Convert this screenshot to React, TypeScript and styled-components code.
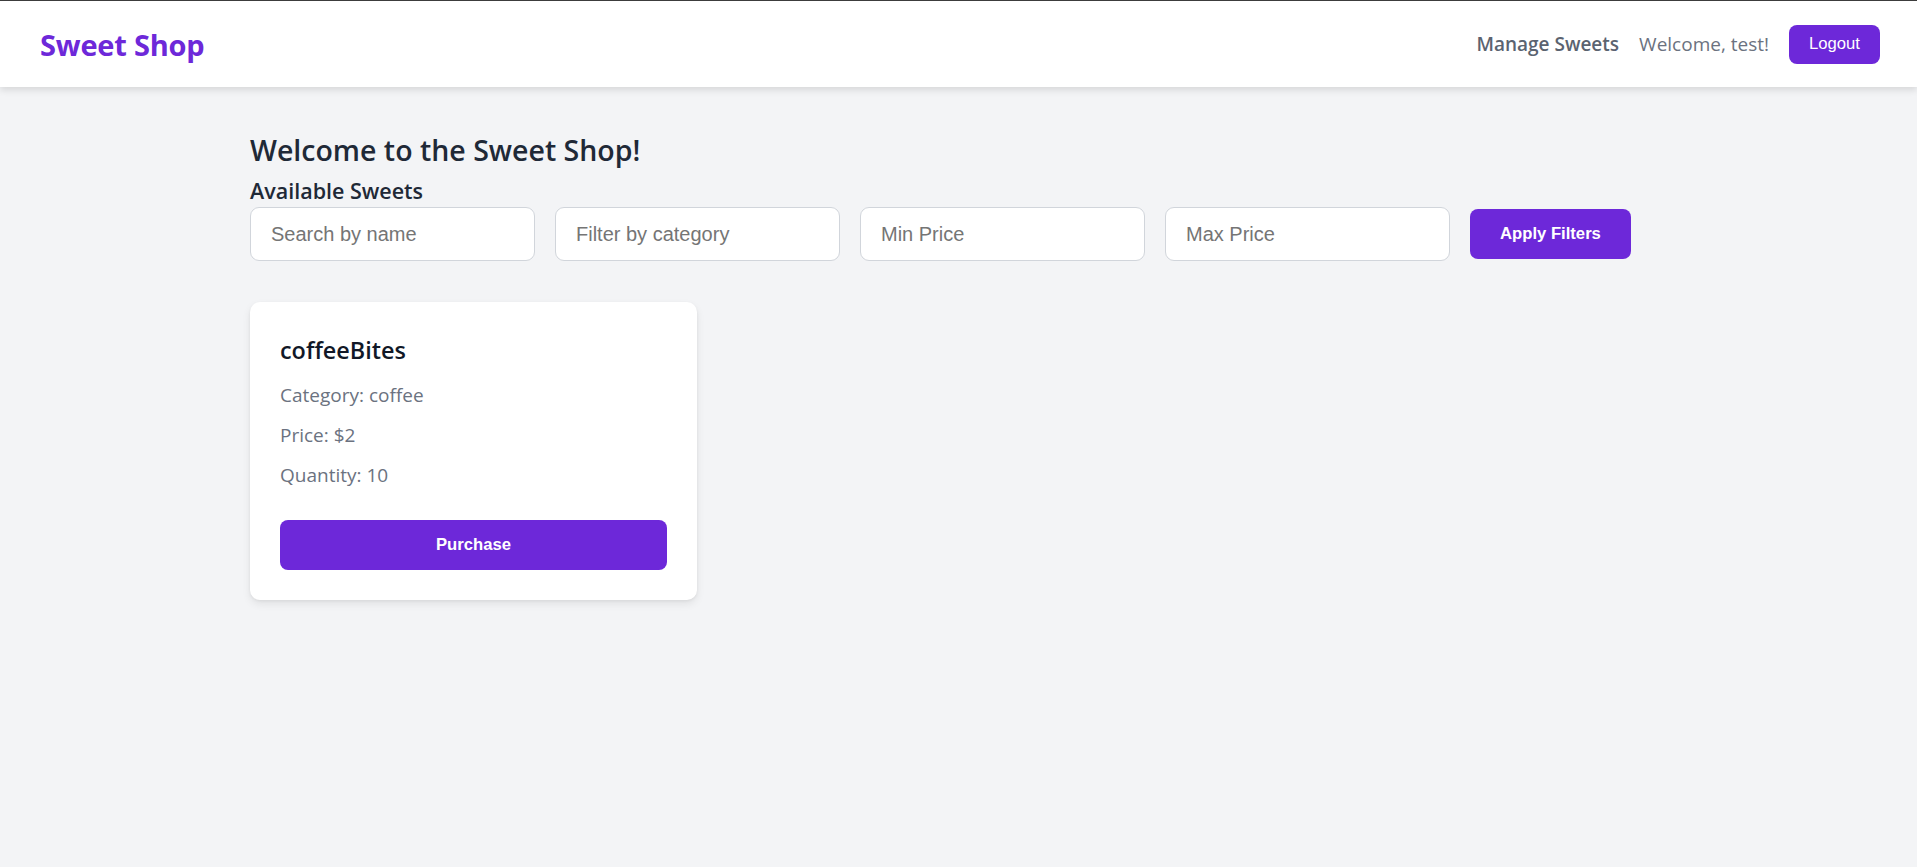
import React from "react";
import styled, { createGlobalStyle } from "styled-components";

const GlobalStyle = createGlobalStyle`
  * { box-sizing: border-box; }
  html, body { margin: 0; padding: 0; }
  body {
    background: #f3f4f6;
    font-family: "Open Sans", "Noto Sans", sans-serif;
    color: #1f2937;
    min-height: 867px;
  }
`;

const Page = styled.div`
  min-height: 867px;
  background: #f3f4f6;
`;

const Header = styled.header`
  height: 87px;
  border-top: 1px solid #3c3c3c;
  background: #ffffff;
  padding: 0 37px 0 40px;
  display: flex;
  align-items: center;
  justify-content: space-between;
  box-shadow: 0 3px 7px rgba(0, 0, 0, 0.12);
  position: relative;
  z-index: 1;
`;

const Brand = styled.div`
  font-size: 29px;
  font-weight: 700;
  color: #6d28d9;
  letter-spacing: -0.2px;
`;

const Nav = styled.nav`
  display: flex;
  align-items: center;
  gap: 20px;
`;

const NavLink = styled.a`
  font-size: 19px;
  font-weight: 600;
  color: #5b6370;
  text-decoration: none;
`;

const Greeting = styled.span`
  font-size: 19px;
  color: #6b7280;
`;

const PurpleButton = styled.button<{ $full?: boolean; $bold?: boolean; $h?: number; $px?: number }>`
  font-family: "Liberation Sans", Arial, sans-serif;
  font-size: 16.67px;
  font-weight: ${(p) => (p.$bold ? 700 : 400)};
  color: #ffffff;
  background: #6d28d9;
  border: none;
  border-radius: 8px;
  height: ${(p) => p.$h ?? 50}px;
  padding: 0 ${(p) => p.$px ?? 30}px;
  width: ${(p) => (p.$full ? "100%" : "auto")};
  cursor: pointer;
  flex-shrink: 0;
`;

const Main = styled.main`
  width: 1417px;
  margin: 0 auto;
  padding-top: 42px;
`;

const Title = styled.h1`
  margin: 0;
  font-size: 28.5px;
  line-height: 42px;
  font-weight: 600;
  color: #1f2937;
`;

const SubTitle = styled.h2`
  margin: 5px 0 1px;
  font-size: 21.5px;
  line-height: 30px;
  font-weight: 600;
  color: #1f2937;
`;

const FilterRow = styled.div`
  display: flex;
  align-items: center;
  gap: 20px;
`;

const FilterInput = styled.input`
  width: 285px;
  height: 54px;
  border: 1px solid #d1d5db;
  border-radius: 9px;
  background: #ffffff;
  padding: 0 20px;
  font-family: "Liberation Sans", Arial, sans-serif;
  font-size: 20px;
  color: #1f2937;
  outline: none;
  &::placeholder {
    color: #757575;
  }
`;

const Grid = styled.div`
  margin-top: 41px;
  display: grid;
  grid-template-columns: 447px;
`;

const Card = styled.div`
  background: #ffffff;
  border-radius: 10px;
  padding: 30px;
  box-shadow: 0 4px 8px rgba(0, 0, 0, 0.08), 0 1px 3px rgba(0, 0, 0, 0.06);
`;

const CardTitle = styled.h3`
  margin: 0 0 12px;
  font-size: 23.4px;
  line-height: 36px;
  font-weight: 600;
  color: #111827;
`;

const Detail = styled.p`
  margin: 0 0 10px;
  font-size: 19px;
  line-height: 30px;
  color: #6b7280;
`;

const CardAction = styled.div`
  margin-top: 30px;
`;

export default function App() {
  return (
    <Page>
      <GlobalStyle />
      <Header>
        <Brand>Sweet Shop</Brand>
        <Nav>
          <NavLink href="#">Manage Sweets</NavLink>
          <Greeting>Welcome, test!</Greeting>
          <PurpleButton $h={39} $px={20}>Logout</PurpleButton>
        </Nav>
      </Header>
      <Main>
        <Title>Welcome to the Sweet Shop!</Title>
        <SubTitle>Available Sweets</SubTitle>
        <FilterRow>
          <FilterInput placeholder="Search by name" />
          <FilterInput placeholder="Filter by category" />
          <FilterInput placeholder="Min Price" />
          <FilterInput placeholder="Max Price" />
          <PurpleButton $bold $h={50} $px={30}>Apply Filters</PurpleButton>
        </FilterRow>
        <Grid>
          <Card>
            <CardTitle>coffeeBites</CardTitle>
            <Detail>Category: coffee</Detail>
            <Detail>Price: $2</Detail>
            <Detail>Quantity: 10</Detail>
            <CardAction>
              <PurpleButton $full $bold $h={50}>Purchase</PurpleButton>
            </CardAction>
          </Card>
        </Grid>
      </Main>
    </Page>
  );
}
